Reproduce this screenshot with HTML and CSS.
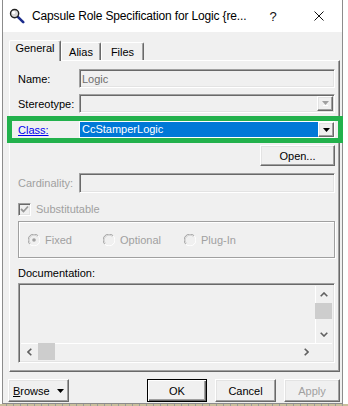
FILE: index.html
```html
<!DOCTYPE html>
<html>
<head>
<meta charset="utf-8">
<title>Capsule Role Specification</title>
<link rel="stylesheet" href="styles.css">
</head>
<body>
<div class="window">
  <div class="titlebar">
    <svg class="app-icon" width="16" height="16" viewBox="0 0 16 16">
      <line x1="8.6" y1="8.6" x2="14.2" y2="14.2" stroke="#1b2c8c" stroke-width="2.6" stroke-linecap="round"/>
      <circle cx="5.6" cy="5.6" r="4.1" fill="#d8d8d8" stroke="#222" stroke-width="1.4"/>
      <circle cx="4.6" cy="4.6" r="1.7" fill="#fff"/>
    </svg>
    <span class="title">Capsule Role Specification for Logic {re...</span>
    <span class="caption-btn help">?</span>
    <span class="caption-btn close">
      <svg width="10" height="10" viewBox="0 0 10 10"><path d="M0.5 0.5 L9.5 9.5 M9.5 0.5 L0.5 9.5" stroke="#111" stroke-width="1" fill="none"/></svg>
    </span>
  </div>

  <div class="client">
    <div class="tabs">
      <div class="tab tab-general active">General</div>
      <div class="tab tab-alias">Alias</div>
      <div class="tab tab-files">Files</div>
    </div>

    <div class="panel">
      <div class="row row-name">
        <span class="label">Name:</span>
        <div class="field sunken"><span class="value">Logic</span></div>
      </div>

      <div class="row row-stereo">
        <span class="label">Stereotype:</span>
        <div class="field sunken combo">
          <span class="combo-text"></span>
          <span class="drop raised">
            <svg width="7" height="5" viewBox="0 0 7 5"><path d="M0 0 H7 L3.5 4 Z" fill="#a0a0a0"/><path d="M1 4.5 H6" stroke="#fff" stroke-width="1"/></svg>
          </span>
        </div>
      </div>

      <div class="row class-row">
        <span class="label link">Class:</span>
        <div class="combo-class">
          <span class="sel">CcStamperLogic</span>
          <span class="drop raised">
            <svg width="7" height="4" viewBox="0 0 7 4"><path d="M0 0 H7 L3.5 4 Z" fill="#000"/></svg>
          </span>
        </div>
      </div>

      <div class="row row-open">
        <div class="btn raised btn-open">Open...</div>
      </div>

      <div class="row row-card">
        <span class="label disabled">Cardinality:</span>
        <div class="field sunken tall"></div>
      </div>

      <div class="row row-check">
        <span class="checkbox sunken">
          <svg width="9" height="9" viewBox="0 0 9 9"><path d="M1 4 L3.5 6.5 L8 1.5" stroke="#9a9a9a" stroke-width="1.8" fill="none"/></svg>
        </span>
        <span class="check-label disabled">Substitutable</span>
      </div>

      <div class="group">
        <div class="radio-item item-fixed">
          <svg class="radio" width="12" height="12" viewBox="0 0 12 12">
            <circle cx="6" cy="6" r="5.5" fill="#f0f0f0"/>
            <path d="M1.8 10.2 A5.5 5.5 0 0 1 10.2 1.8" stroke="#a0a0a0" stroke-width="1" fill="none"/>
            <path d="M10.2 1.8 A5.5 5.5 0 0 1 1.8 10.2" stroke="#fff" stroke-width="1" fill="none"/>
            <path d="M2.6 9.4 A4.5 4.5 0 0 1 9.4 2.6" stroke="#d0d0d0" stroke-width="1" fill="none"/>
            <circle cx="6" cy="6" r="1.8" fill="#a0a0a0"/>
          </svg>
          <span class="disabled">Fixed</span>
        </div>
        <div class="radio-item item-optional">
          <svg class="radio" width="12" height="12" viewBox="0 0 12 12">
            <circle cx="6" cy="6" r="5.5" fill="#f0f0f0"/>
            <path d="M1.8 10.2 A5.5 5.5 0 0 1 10.2 1.8" stroke="#a0a0a0" stroke-width="1" fill="none"/>
            <path d="M10.2 1.8 A5.5 5.5 0 0 1 1.8 10.2" stroke="#fff" stroke-width="1" fill="none"/>
            <path d="M2.6 9.4 A4.5 4.5 0 0 1 9.4 2.6" stroke="#d0d0d0" stroke-width="1" fill="none"/>
          </svg>
          <span class="disabled">Optional</span>
        </div>
        <div class="radio-item item-plugin">
          <svg class="radio" width="12" height="12" viewBox="0 0 12 12">
            <circle cx="6" cy="6" r="5.5" fill="#f0f0f0"/>
            <path d="M1.8 10.2 A5.5 5.5 0 0 1 10.2 1.8" stroke="#a0a0a0" stroke-width="1" fill="none"/>
            <path d="M10.2 1.8 A5.5 5.5 0 0 1 1.8 10.2" stroke="#fff" stroke-width="1" fill="none"/>
            <path d="M2.6 9.4 A4.5 4.5 0 0 1 9.4 2.6" stroke="#d0d0d0" stroke-width="1" fill="none"/>
          </svg>
          <span class="disabled">Plug-In</span>
        </div>
      </div>

      <div class="doc-label">Documentation:</div>

      <div class="textarea sunken">
        <div class="text-content"></div>
        <div class="vscroll">
          <span class="sb-btn"><svg width="8" height="5" viewBox="0 0 8 5"><path d="M0.7 4.3 L4 1 L7.3 4.3" stroke="#606060" stroke-width="1.6" fill="none"/></svg></span>
          <span class="sb-thumb-v"></span>
          <span class="sb-track"></span>
          <span class="sb-btn"><svg width="8" height="5" viewBox="0 0 8 5"><path d="M0.7 0.7 L4 4 L7.3 0.7" stroke="#606060" stroke-width="1.6" fill="none"/></svg></span>
        </div>
        <div class="hscroll">
          <span class="sb-btn"><svg width="5" height="8" viewBox="0 0 5 8"><path d="M4.3 0.7 L1 4 L4.3 7.3" stroke="#606060" stroke-width="1.6" fill="none"/></svg></span>
          <span class="sb-thumb-h"></span>
          <span class="sb-track"></span>
          <span class="sb-btn"><svg width="5" height="8" viewBox="0 0 5 8"><path d="M0.7 0.7 L4 4 L0.7 7.3" stroke="#606060" stroke-width="1.6" fill="none"/></svg></span>
        </div>
        <div class="corner"></div>
      </div>
    </div>

    <div class="footer">
      <div class="btn raised btn-browse"><span><u>B</u>rowse</span>
        <svg class="browse-arrow" width="7" height="4" viewBox="0 0 7 4"><path d="M0 0 H7 L3.5 4 Z" fill="#000"/></svg>
      </div>
      <div class="btn btn-ok">OK</div>
      <div class="btn raised btn-cancel">Cancel</div>
      <div class="btn raised btn-apply">Apply</div>
    </div>
  </div>
</div>
<div class="desk-strip"></div>
</body>
</html>
```

FILE: styles.css
```css
* { box-sizing: border-box; }
html, body { margin: 0; padding: 0; }
body {
  width: 348px;
  height: 406px;
  overflow: hidden;
  background: #ffffff;
  font-family: "Liberation Sans", Arial, sans-serif;
  font-size: 11px;
  color: #000;
}

.window {
  margin-left: 2px;
  width: 341px;
  height: 404px;
  border: 1px solid #8c8c8c;
  border-top: 0;
  background: #f0f0f0;
  display: flex;
  flex-direction: column;
}

.desk-strip {
  height: 2px;
  background: repeating-linear-gradient(90deg, #c9bf9c 0 6px, #9a9a9a 6px 7px);
}

/* title bar */
.titlebar {
  height: 32px;
  flex: none;
  background: #fff;
  display: flex;
  align-items: center;
}
.app-icon { margin-left: 6px; flex: none; }
.title {
  margin-left: 7px;
  font-size: 12px;
  letter-spacing: -0.15px;
  white-space: nowrap;
  color: #000;
}
.caption-btn {
  width: 46px;
  height: 32px;
  flex: none;
  display: flex;
  align-items: center;
  justify-content: center;
}
.help { margin-left: auto; font-size: 13px; color: #111; }

/* client */
.client {
  flex: 1;
  display: flex;
  flex-direction: column;
}

.tabs {
  display: flex;
  align-items: flex-end;
  height: 20px;
  margin-top: 8px;
  padding-left: 6px;
  flex: none;
}
.tab {
  height: 18px;
  padding-top: 3px;
  line-height: 13px;
  text-align: center;
  border-left: 1px solid #fff;
  border-top: 1px solid #fff;
  border-right: 1px solid #696969;
  box-shadow: inset -1px 0 #a0a0a0;
  border-radius: 2px 2px 0 0;
  background: #f0f0f0;
}
.tab.active {
  height: 21px;
  margin-bottom: -1px;
  padding-top: 1px;
  position: relative;
  z-index: 1;
}
.tab-general { width: 52px; }
.tab-alias { width: 40px; }
.tab-files { width: 43px; }

.panel {
  margin-left: 6px;
  width: 331px;
  height: 312px;
  flex: none;
  border: 1px solid;
  border-color: #fff #696969 #696969 #fff;
  box-shadow: inset -1px -1px #a0a0a0;
  padding: 0 4px 0 8px;
  display: flex;
  flex-direction: column;
}

.row { display: flex; align-items: center; flex: none; }
.label { width: 61px; flex: none; white-space: nowrap; }
.link { color: #0000ee; text-decoration: underline; }
.disabled { color: #a0a0a0; }

.sunken {
  border: 1px solid;
  border-color: #a0a0a0 #fff #fff #a0a0a0;
  box-shadow: inset 1px 1px #696969, inset -1px -1px #e3e3e3;
}
.raised {
  border: 1px solid;
  border-color: #fff #696969 #696969 #fff;
  box-shadow: inset -1px -1px #a0a0a0, inset 1px 1px #e3e3e3;
  background: #f0f0f0;
}

.field {
  width: 256px;
  height: 19px;
  background: #f0f0f0;
  display: flex;
  align-items: center;
  padding-left: 2px;
}
.field.tall { height: 20px; }
.value { color: #6d6d6d; }

.row-name { margin-top: 8px; }
.row-stereo { margin-top: 6px; }

.combo { padding: 1px 1px 1px 2px; align-items: stretch; }
.combo-text { flex: 1; }
.drop {
  width: 16px;
  flex: none;
  display: flex;
  align-items: center;
  justify-content: center;
}

.class-row {
  margin: 3px -8px 0 -11px;
  height: 27px;
  border: 5px solid #22b14c;
  padding: 0 3px 0 6px;
}
.combo-class {
  width: 256px;
  height: 17px;
  border: 1px solid #fff;
  display: flex;
}
.combo-class .sel {
  flex: 1;
  background: #0078d7;
  color: #fff;
  padding-left: 2px;
  line-height: 15px;
}
.combo-class .drop { width: 16px; }

.row-open { margin-top: 2px; justify-content: flex-end; }
.btn {
  height: 23px;
  display: flex;
  align-items: center;
  justify-content: center;
  flex: none;
}
.btn-open { width: 75px; height: 21px; }

.row-card { margin-top: 7px; }

.row-check { margin-top: 8px; height: 16px; }
.checkbox {
  width: 13px;
  height: 13px;
  background: #f0f0f0;
  display: flex;
  align-items: center;
  justify-content: center;
  flex: none;
}
.check-label { margin-left: 5px; }

.group {
  margin-top: 4px;
  height: 37px;
  flex: none;
  border: 1px solid #a0a0a0;
  box-shadow: inset 1px 1px #fff, 1px 1px #fff;
  display: flex;
  align-items: center;
  padding-left: 9px;
}
.radio-item { display: flex; align-items: center; flex: none; }
.radio { flex: none; margin-right: 5px; }
.item-fixed { width: 75px; }
.item-optional { width: 81px; }

.doc-label { margin-top: 9px; line-height: 13px; flex: none; }

.textarea {
  margin-top: 3px;
  height: 80px;
  width: 317px;
  flex: none;
  background: #f0f0f0;
  padding: 2px;
  display: grid;
  grid-template-columns: 1fr 17px;
  grid-template-rows: 1fr 17px;
}
.text-content { background: #f0f0f0; }
.vscroll {
  display: flex;
  flex-direction: column;
  background: #f0f0f0;
  box-shadow: inset 1px 0 #fff;
}
.hscroll {
  display: flex;
  background: #f0f0f0;
  box-shadow: inset 0 1px #fff;
}
.corner { background: #f0f0f0; box-shadow: inset 0 1px #fff; }
.sb-btn {
  width: 17px;
  height: 17px;
  flex: none;
  display: flex;
  align-items: center;
  justify-content: center;
}
.sb-track { flex: 1; }
.sb-thumb-v { width: 17px; height: 16px; flex: none; background: #cdcdcd; }
.sb-thumb-h { width: 17px; height: 17px; flex: none; background: #cdcdcd; }

/* footer */
.footer {
  display: flex;
  padding: 7px 2px 0 5px;
  flex: none;
}
.btn-browse { width: 61px; justify-content: flex-start; padding-left: 4px; }
.browse-arrow { margin-left: 7px; }
.btn-ok {
  width: 60px;
  margin-left: 78px;
  background: #f0f0f0;
  border: 1px solid #000;
  box-shadow: inset 1px 1px #fff, inset -1px -1px #696969, inset -2px -2px #a0a0a0;
}
.btn-cancel { width: 61px; margin-left: 8px; }
.btn-apply { width: 56px; margin-left: 8px; color: #a0a0a0; }
```
